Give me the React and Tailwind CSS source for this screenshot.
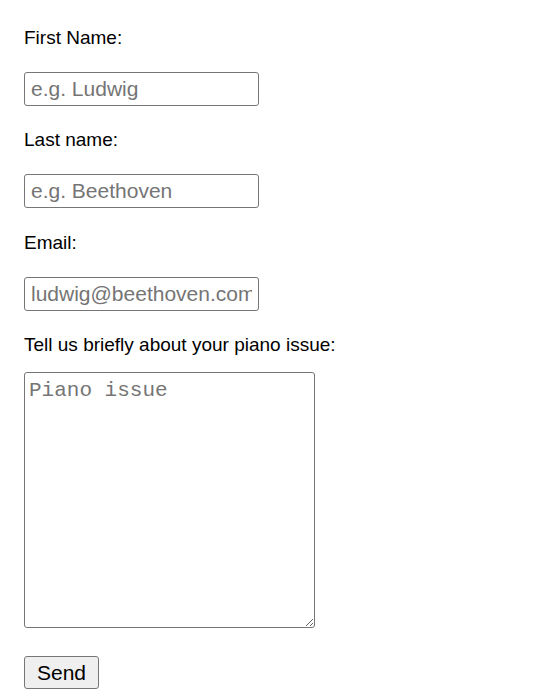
export default function App() {
  const field =
    "block mt-[23px] h-[34px] w-[235px] rounded-[3px] border border-[#767676] bg-white px-[6px] text-[21px] text-black placeholder:text-[#757575] outline-none";
  const label = "block text-[19px] leading-[22px] text-black";

  return (
    <div className="min-h-screen bg-white pl-6 pt-[27px] font-['Liberation_Sans',Arial,sans-serif]">
      <form onSubmit={(e) => e.preventDefault()}>
        <label className={label}>First Name:</label>
        <input type="text" placeholder="e.g. Ludwig" className={field} />

        <label className={`${label} mt-[23px]`}>Last name:</label>
        <input type="text" placeholder="e.g. Beethoven" className={field} />

        <label className={`${label} mt-[24px]`}>Email:</label>
        <input type="email" placeholder="ludwig@beethoven.com" className={field} />

        <label className={`${label} mt-[23px]`}>Tell us briefly about your piano issue:</label>
        <textarea
          placeholder="Piano issue"
          className="block mt-[16px] h-[256px] w-[291px] rounded-[3px] border border-[#767676] bg-white px-[4px] py-[2px] font-['Liberation_Mono','Courier_New',monospace] text-[21px] text-black placeholder:text-[#757575] outline-none"
        />

        <button
          type="submit"
          className="mt-[28px] h-[33px] w-[75px] rounded-[3px] border border-[#767676] bg-[#efefef] text-[21px] text-black"
        >
          Send
        </button>
      </form>
    </div>
  );
}
